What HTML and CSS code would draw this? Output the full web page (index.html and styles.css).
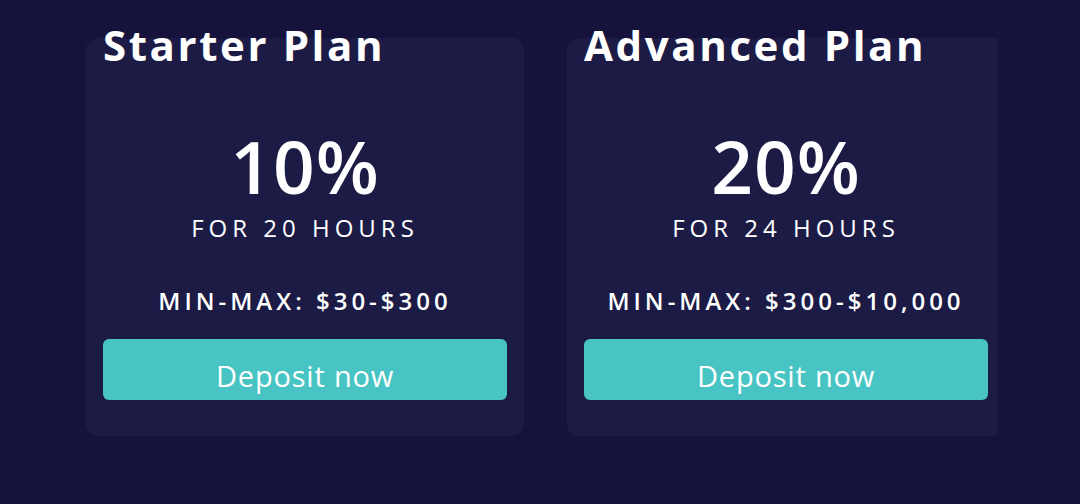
FILE: index.html
```html
<!DOCTYPE html>
<html lang="en">
<head>
    <meta charset="UTF-8">
    <meta name="viewport" content="width=device-width, initial-scale=1.0">
    <title>Plans</title>
    <link rel="stylesheet" href="styles.css">
</head>
<body>

<div class="plans">
    <div class="plan">
        <h2>Starter Plan</h2>
        <div class="rate">10%</div>
        <div class="period">FOR 20 HOURS</div>
        <div class="range">MIN-MAX: $30-$300</div>
        <button type="button">Deposit now</button>
    </div>

    <div class="plan">
        <h2>Advanced Plan</h2>
        <div class="rate">20%</div>
        <div class="period">FOR 24 HOURS</div>
        <div class="range">MIN-MAX: $300-$10,000</div>
        <button type="button">Deposit now</button>
    </div>
</div>

</body>
</html>
```

FILE: styles.css
```css
body {
    margin: 0;
    height: 504px;
    background-color: #15133b;
    font-family: "Open Sans", Arial, sans-serif;
    color: #fff;
}
.plans {
    display: flex;
    gap: 43px;
    width: 912px;
    margin-left: 86px;
    padding-top: 38px;
    overflow: hidden;
}
.plan {
    flex: 0 0 438px;
    height: 398px;
    box-sizing: border-box;
    padding: 0 17px 36px;
    background-color: #1c1b45;
    border-radius: 12px;
    display: flex;
    flex-direction: column;
    align-items: center;
}
h2 {
    align-self: flex-start;
    margin: -18px 0 0;
    font-size: 42px;
    line-height: 50px;
    font-weight: 700;
    letter-spacing: 2.6px;
}
.rate {
    margin-top: 60px;
    font-size: 73px;
    line-height: 72px;
    font-weight: 600;
    letter-spacing: 1px;
}
.period {
    margin-top: 12px;
    font-size: 24px;
    line-height: 28px;
    letter-spacing: 5px;
    font-weight: 500;
}
.range {
    margin-top: 42px;
    font-size: 24px;
    letter-spacing: 4px;
    font-weight: 600;
}
button {
    margin-top: auto;
    width: 100%;
    height: 61px;
    padding: 12px 0 0;
    background-color: #48c4c4;
    color: #fff;
    border: none;
    border-radius: 6px;
    font-family: inherit;
    font-size: 29px;
    letter-spacing: 0.8px;
    cursor: pointer;
}
```
